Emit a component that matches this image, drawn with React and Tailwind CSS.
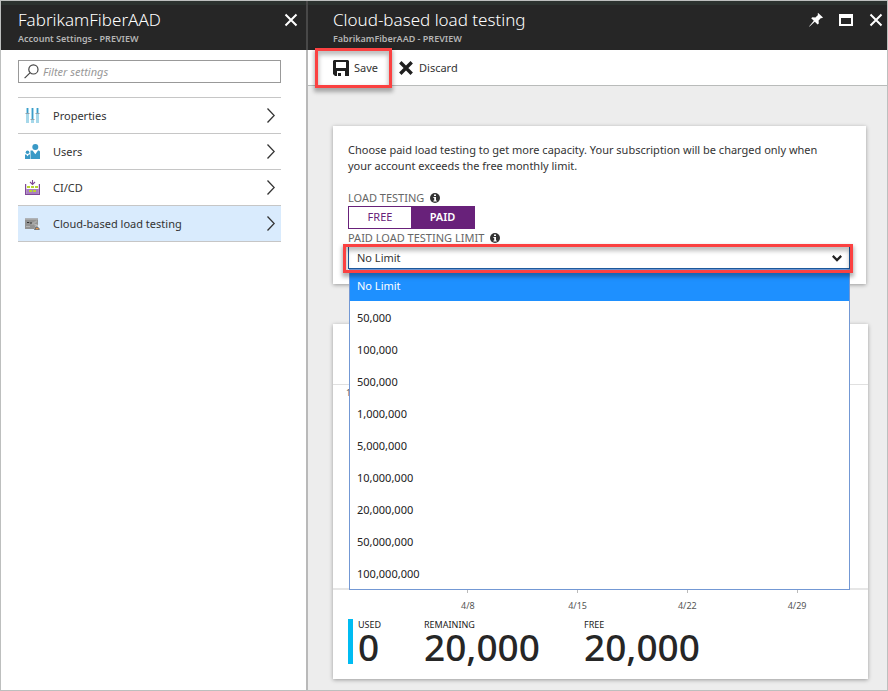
import React from "react";

const limits = [
  "No Limit",
  "50,000",
  "100,000",
  "500,000",
  "1,000,000",
  "5,000,000",
  "10,000,000",
  "20,000,000",
  "50,000,000",
  "100,000,000",
];

const dates = ["4/8", "4/15", "4/22", "4/29"];

function CloseIcon() {
  return (
    <svg width="14" height="14" viewBox="0 0 14 14" fill="none" stroke="#fff" strokeWidth="2">
      <path d="M1.5 1.5 12.5 12.5M12.5 1.5 1.5 12.5" />
    </svg>
  );
}

function PinIcon() {
  return (
    <svg width="14" height="14" viewBox="0 0 14 14" fill="#fff">
      <path d="M9.2 0 14 4.6 12.8 5.2 12 5 9.6 7.6 9.8 10.6 8.6 11.6 5.8 8.8 0.6 13.6 0 13.4 4.8 7.8 2.2 5.2 3.4 4.2 6.4 4.4 9 2 8.6 0.8Z" />
    </svg>
  );
}

function WindowIcon() {
  return (
    <svg width="14" height="12" viewBox="0 0 14 12" shapeRendering="crispEdges">
      <path fill="#fff" fillRule="evenodd" d="M0 0H14V12H0ZM2 4V10H12V4Z" />
    </svg>
  );
}

function SaveIcon() {
  return (
    <svg width="16" height="16" viewBox="0 0 16 16">
      <path
        fill="#1f1f1f"
        fillRule="evenodd"
        d="M1 0H15L16 1V16H2L0 14V1ZM3 2V8H13V2ZM4 11V16H12V11Z"
      />
      <path fill="#1f1f1f" d="M5 13H8V16H5Z" />
    </svg>
  );
}

function DiscardIcon() {
  return (
    <svg width="14" height="14" viewBox="0 0 14 14" fill="none" stroke="#1f1f1f" strokeWidth="3.4">
      <path d="M1.3 1.3 12.7 12.7M12.7 1.3 1.3 12.7" />
    </svg>
  );
}

function SearchIcon() {
  return (
    <svg width="15" height="15" viewBox="0 0 15 15" fill="none" stroke="#444" strokeWidth="1.2" className="shrink-0">
      <circle cx="9.4" cy="5.4" r="4.6" />
      <path d="M6 8.8 0.6 14.2" />
    </svg>
  );
}

function InfoIcon() {
  return (
    <svg width="10" height="10" viewBox="0 0 10 10">
      <circle cx="5" cy="5" r="5" fill="#333" />
      <path fill="#fff" d="M4 1.4H6V3H4ZM3.4 4H6V7.4H6.8V8.4H3.4V7.4H4.2V5H3.4Z" />
    </svg>
  );
}

function PropertiesIcon() {
  return (
    <svg width="15" height="15" viewBox="0 0 15 15">
      <path fill="#a6d8ea" d="M1 0H4V15H1ZM6 0H9V15H6ZM11 0H14V15H11Z" />
      <path fill="#3d9bc9" d="M2 0H3V5H2ZM7 0H8V11H7ZM12 0H13V5H12Z" />
      <path fill="#8fa3ad" d="M0.5 5H4.5V6H0.5ZM5.5 11H9.5V12H5.5ZM10.5 5H14.5V6H10.5Z" />
    </svg>
  );
}

function UsersIcon() {
  return (
    <svg width="15" height="15" viewBox="0 0 15 15" fill="#3999c6">
      <circle cx="10.3" cy="3" r="3" />
      <path d="M5.5 6.6H7.6L10.3 10.2 13 6.6H14L15 7.6V15H5.5Z" />
      <circle cx="2.5" cy="8.2" r="1.8" />
      <path d="M0 10.5H1.2L2.5 12.2 3.8 10.5H5V15H0Z" />
    </svg>
  );
}

function PipelineIcon() {
  return (
    <svg width="15" height="15" viewBox="0 0 15 15">
      <path fill="#804998" d="M0 4H1.2V14H13.8V4H15V15H0Z" />
      <path fill="#a97fc0" d="M1.2 9H13.8V14H1.2Z" />
      <path fill="#b8d432" d="M2 6H5V8H2ZM6 6H9V8H6ZM10 6H13V8H10ZM4 10H7V12H4ZM8 10H11V12H8Z" />
      <path fill="none" stroke="#804998" strokeWidth="1.1" d="M7.5 0V4.2M5 2 7.5 4.5 10 2" />
    </svg>
  );
}

function LoadTestIcon() {
  return (
    <svg width="15" height="12" viewBox="0 0 15 12">
      <path fill="#929292" d="M0 0.5H13V11H0Z" />
      <path fill="#a8a8a8" d="M0 0.5H13V2H0ZM5 6 12 2V4L8 7Z" />
      <path fill="#333" d="M2 4H4.2V5H2ZM5 4.4H7V5.4H5Z" />
      <path fill="#b4b4b4" d="M1 8H5V9H1ZM9 6H13L10 8Z" />
      <path fill="#e9f2fb" d="M9 10.4 11.4 7.4H15V12H9Z" />
      <path fill="#777" d="M9.6 9.5 12 8 14.6 10.6V12H9Z" />
      <path fill="#e8954a" d="M11 10H13.4V11.2H11Z" />
    </svg>
  );
}

const menu = [
  { label: "Properties", Icon: PropertiesIcon },
  { label: "Users", Icon: UsersIcon },
  { label: "CI/CD", Icon: PipelineIcon },
  { label: "Cloud-based load testing", Icon: LoadTestIcon, active: true },
];

function MenuItem({ label, Icon, active }) {
  return (
    <li className={active ? "border-t border-[#c6c6c6] bg-[#d9ebfd]" : "border-t border-[#c6c6c6]"}>
      <a href="#" className="flex h-[35px] items-center pl-[7px] pr-[6px]">
        <span className="flex w-7 items-center">
          <Icon />
        </span>
        <span className="grow pt-px">{label}</span>
        <svg width="8" height="15" viewBox="0 0 8 15" fill="none" stroke="#333" strokeWidth="1.3">
          <path d="M0.5 0.5 7.2 7.5 0.5 14.5" />
        </svg>
      </a>
    </li>
  );
}

function BladeHeader({ title, subtitle, children }) {
  return (
    <header className="flex h-[49px] justify-between border-t-4 border-[#2c322f] bg-[#262626]">
      <div className="pt-[3px]">
        <h1 className="text-[17px] leading-6 font-light text-white">{title}</h1>
        <p className="pt-px text-[9px] leading-3 font-semibold text-[#b5b5b5]">{subtitle}</p>
      </div>
      <div className="flex h-[30px] items-center gap-4">{children}</div>
    </header>
  );
}

function FieldLabel({ htmlFor, children }) {
  return (
    <div className="flex h-4 items-center gap-[6px] text-[#666]">
      <label htmlFor={htmlFor}>{children}</label>
      <InfoIcon />
    </div>
  );
}

function Stat({ label, value, className }) {
  return (
    <div className={className}>
      <dt className="text-[9px] leading-3 text-[#222]">{label}</dt>
      <dd className="text-[37px] leading-8 font-medium text-[#262626]">{value}</dd>
    </div>
  );
}

export default function App() {
  return (
    <div className="flex min-h-screen border border-[#bdbfbe] bg-white font-['Noto_Sans','Open_Sans',sans-serif] text-[11px] text-[#333]">
      <aside className="w-[305px] shrink-0">
        <div className="bg-[#262626] [&>header]:pl-[17px] [&>header]:pr-2">
          <BladeHeader title="FabrikamFiberAAD" subtitle="Account Settings - PREVIEW">
            <button type="button" aria-label="Close settings">
              <CloseIcon />
            </button>
          </BladeHeader>
        </div>
        <div className="pt-[10px] pr-[25px] pl-[17px]">
          <label className="flex h-[23px] items-center gap-1 border border-[#999] pl-[5px]">
            <SearchIcon />
            <input
              type="text"
              aria-label="Filter settings"
              placeholder="Filter settings"
              className="w-full min-w-0 pt-px italic outline-none placeholder:text-[#999]"
            />
          </label>
          <ul className="mt-[14px] border-b border-[#c6c6c6]">
            {menu.map((item) => (
              <MenuItem key={item.label} {...item} />
            ))}
          </ul>
        </div>
      </aside>

      <div className="flex w-[2px] shrink-0 flex-col">
        <div className="h-[49px] bg-[#484848]" />
        <div className="grow bg-[#b9b9b9]" />
      </div>

      <main className="flex min-w-0 grow flex-col bg-[#ededed]">
        <div className="bg-[#262626] [&>header]:pl-[25px] [&>header]:pr-[4px]">
          <BladeHeader title="Cloud-based load testing" subtitle="FabrikamFiberAAD - PREVIEW">
            <button type="button" aria-label="Pin">
              <PinIcon />
            </button>
            <button type="button" aria-label="Maximize">
              <WindowIcon />
            </button>
            <button type="button" aria-label="Close">
              <CloseIcon />
            </button>
          </BladeHeader>
        </div>

        <div className="flex h-9 items-center border-b border-[#b9bbba] bg-white pt-px pl-[25px]">
          <div className="relative mr-[21px]">
            <button type="button" className="flex items-center gap-[5px]">
              <SaveIcon />
              <span className="pt-px">Save</span>
            </button>
            <div className="pointer-events-none absolute -top-[11px] -right-[14px] -bottom-[11px] -left-[18px] z-10 border-3 border-[#fb4141] shadow-[0_3px_4px_1px_rgba(0,0,0,0.3),inset_0_3px_4px_1px_rgba(0,0,0,0.25)]" />
          </div>
          <button type="button" className="flex items-center gap-[6px]">
            <DiscardIcon />
            <span className="pt-px">Discard</span>
          </button>
        </div>

        <div className="flex grow flex-col gap-10 pt-10 pr-[19px] pb-[11px] pl-[25px]">
          <section className="mr-[2px] h-[158px] bg-white pt-4 pr-4 pl-[15px] shadow-[0_1px_4px_rgba(0,0,0,0.35)]">
            <p className="pr-4 leading-4">
              Choose paid load testing to get more capacity. Your subscription will be charged only when your account
              exceeds the free monthly limit.
            </p>
            <div className="mt-4">
              <FieldLabel>LOAD TESTING</FieldLabel>
            </div>
            <div className="flex h-[23px] w-[127px] border border-[#68217a]">
              <button type="button" className="w-[62px] text-[#68217a]">
                FREE
              </button>
              <button type="button" className="grow bg-[#68217a] font-semibold text-white">
                PAID
              </button>
            </div>
            <div className="pt-px">
              <FieldLabel htmlFor="limit">PAID LOAD TESTING LIMIT</FieldLabel>
            </div>
            <div className="relative flex">
              <select
                id="limit"
                defaultValue="No Limit"
                className="h-[23px] w-full appearance-none border border-[#1c5a9e] bg-white pt-0.5 pl-2 text-[#333] outline-none"
              >
                {limits.map((limit) => (
                  <option key={limit}>{limit}</option>
                ))}
              </select>
              <svg
                width="10"
                height="7"
                viewBox="0 0 10 7"
                fill="none"
                stroke="#222"
                strokeWidth="2.2"
                className="pointer-events-none absolute top-[9px] right-2"
              >
                <path d="M0.8 0.9 5 5.1 9.2 0.9" />
              </svg>
              <ul
                role="listbox"
                aria-label="Paid load testing limit"
                className="absolute top-[23px] right-0 left-px z-10 border border-[#7398d4] bg-white text-[#222]"
              >
                {limits.map((limit, i) => (
                  <li
                    key={limit}
                    role="option"
                    aria-selected={i === 0}
                    className={
                      i === 0
                        ? "flex h-[31px] items-center bg-[#1e90ff] pt-px pl-[7px] text-white"
                        : "flex h-8 items-center pt-0.5 pl-[7px]"
                    }
                  >
                    {limit}
                  </li>
                ))}
              </ul>
              <div className="pointer-events-none absolute -top-0.5 -right-[3px] -bottom-1 -left-[5px] z-20 border-3 border-[#fb4141] shadow-[0_3px_4px_1px_rgba(0,0,0,0.3),inset_0_3px_4px_1px_rgba(0,0,0,0.25)]" />
            </div>
          </section>

          <section className="grow bg-white pb-[15px] shadow-[0_1px_4px_rgba(0,0,0,0.35)]">
            <div className="h-[61px] border-b border-[#e0e0e0]" />
            <div className="h-[205px] border-b-2 border-[#e6e6e6] pl-[13px] text-[9px] leading-4 text-[#666]">1</div>
            <div className="grid grid-cols-4 pr-4 pl-20 text-center text-[9px] text-[#555]">
              {dates.map((date) => (
                <div key={date} className="flex flex-col items-center">
                  <span className="h-[3px] w-px bg-[#bbb]" />
                  <span className="mt-[7px] leading-3">{date}</span>
                </div>
              ))}
            </div>
            <dl className="mt-[7px] ml-[15px] flex h-[45px] border-l-5 border-[#00bcf2] pl-[5px]">
              <Stat label="USED" value="0" className="w-[66px]" />
              <Stat label="REMAINING" value="20,000" className="w-40" />
              <Stat label="FREE" value="20,000" />
            </dl>
          </section>
        </div>
      </main>
    </div>
  );
}
